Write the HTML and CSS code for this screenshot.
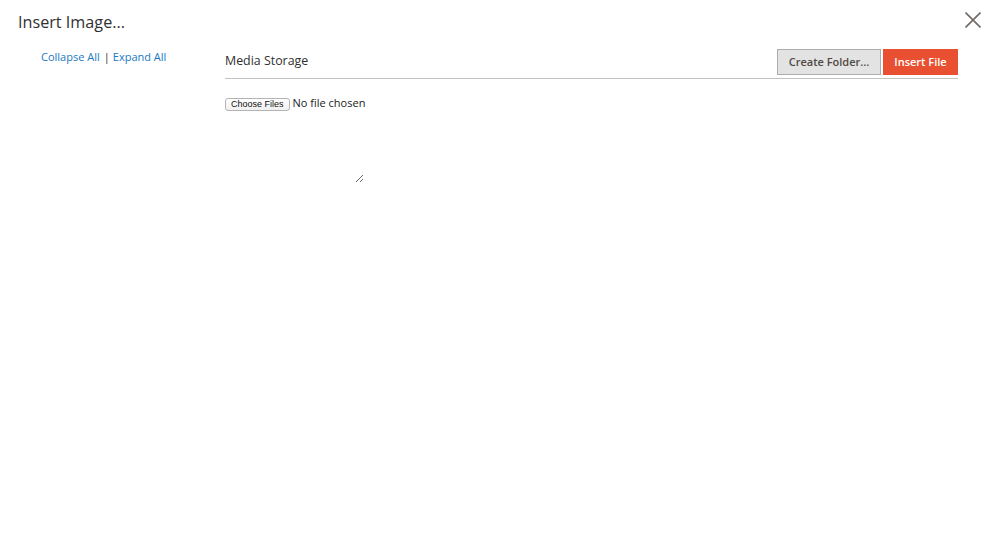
FILE: index.html
```html
<!DOCTYPE html>
<html>
<head>
<meta charset="utf-8">
<link rel="stylesheet" href="styles.css">
</head>
<body>
<div class="modal">
  <header class="modal-header">
    <h1 class="modal-title">Insert Image...</h1>
    <button class="close" aria-label="Close">
      <svg width="16" height="16" viewBox="0 0 16 16"><path d="M0.5 0.5L15.5 15.5M15.5 0.5L0.5 15.5" stroke="#736963" stroke-width="1.6" fill="none"/></svg>
    </button>
  </header>
  <div class="modal-body">
    <aside class="tree">
      <a href="#" class="link">Collapse All</a><span class="sep">|</span><a href="#" class="link">Expand All</a>
    </aside>
    <main class="content">
      <div class="toolbar">
        <span class="crumb">Media Storage</span>
        <div class="actions">
          <button class="btn btn-secondary">Create Folder...</button>
          <button class="btn btn-primary">Insert File</button>
        </div>
      </div>
      <div class="upload">
        <span class="file-btn">Choose Files</span><span class="file-label">No file chosen</span>
      </div>
      <textarea class="area"></textarea>
    </main>
  </div>
</div>
</body>
</html>
```
FILE: styles.css
```css
* { box-sizing: border-box; }
html, body { margin: 0; padding: 0; background: #fff; }
body {
  font-family: "Open Sans", "Liberation Sans", sans-serif;
  color: #303030;
  width: 999px;
  height: 543px;
  overflow: hidden;
}
.modal { padding: 0 18px 0 18px; }
.modal-header {
  display: flex;
  justify-content: space-between;
  align-items: flex-start;
  height: 43px;
}
.modal-title {
  margin: 10px 0 0 0;
  font-size: 16.2px;
  font-weight: 400;
  line-height: 24px;
  color: #303030;
}
.close {
  border: none;
  background: none;
  padding: 0;
  margin: 12px 0 0 0;
  width: 16px;
  height: 16px;
  display: block;
}
.close svg { display: block; }
.modal-body { display: flex; }
.tree {
  width: 207px;
  padding-left: 23px;
  font-size: 11px;
  line-height: 17px;
  margin-top: 5px;
}
.link { color: #1979c3; text-decoration: none; }
.sep { margin: 0 3px 0 4px; color: #303030; }
.content { width: 733px; }
.toolbar {
  display: flex;
  justify-content: space-between;
  align-items: flex-start;
  border-bottom: 1px solid #c2c2c2;
  height: 30px;
  margin-top: 6px;
}
.crumb {
  font-size: 12.4px;
  line-height: 18px;
  margin-top: 3px;
  color: #303030;
}
.actions { display: flex; gap: 2px; }
.btn {
  font-family: "Open Sans", "Liberation Sans", sans-serif;
  font-size: 11px;
  font-weight: 600;
  height: 26px;
  padding: 0;
  border: 1px solid;
  border-radius: 0;
  line-height: 24px;
  white-space: nowrap;
  text-align: center;
}
.btn-secondary {
  background: #e3e3e3;
  border-color: #adadad;
  color: #514943;
  width: 104px;
  margin-left: 1px;
}
.btn-primary {
  color: #fff;
  background: #e95031;
  border-color: #e95031;
  width: 75px;
}
.upload {
  margin-top: 16px;
  display: flex;
  align-items: center;
  height: 15px;
}
.file-btn {
  font-family: "Liberation Sans", sans-serif;
  font-size: 9px;
  color: #111;
  border: 1px solid #b4b4b4;
  border-radius: 3px;
  background: linear-gradient(#fff, #f0f0f0);
  padding: 0 5px;
  height: 13px;
  line-height: 11px;
  margin-top: 3px;
}
.file-label {
  font-size: 11px;
  margin-left: 3px;
  color: #222;
  line-height: 15px;
}
.area {
  display: block;
  width: 139px;
  height: 73px;
  border: none;
  background: transparent;
  outline: none;
  margin: 0;
  padding: 0;
  resize: both;
}
```
